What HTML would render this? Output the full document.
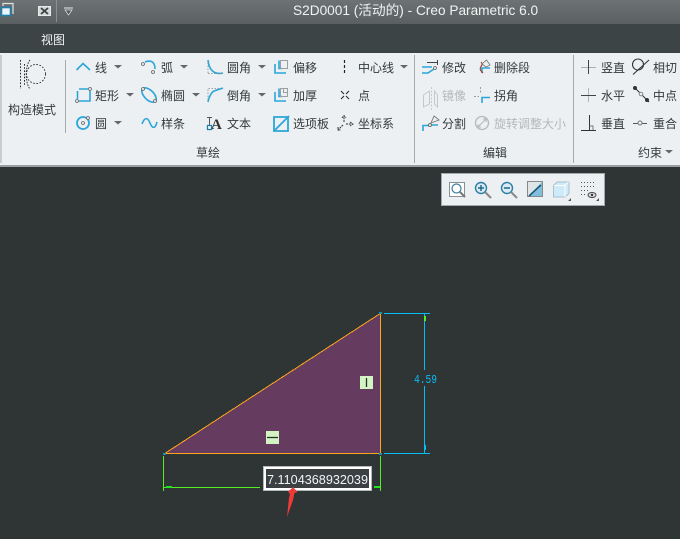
<!DOCTYPE html>
<html><head><meta charset="utf-8">
<style>
html,body{margin:0;padding:0;background:#2f3435}
#p{position:relative;width:680px;height:539px;overflow:hidden;background:#2f3435;font-family:"Liberation Sans","Noto Sans CJK SC",sans-serif}
.t{position:absolute;font-size:12px;line-height:16px;color:#33393c;white-space:nowrap;font-family:"Noto Sans CJK SC","Liberation Sans",sans-serif}
.d{color:#b4b8ba}
svg{position:absolute;left:0;top:0}
</style></head><body><div id="p">
<div style="position:absolute;left:0;top:0;width:680px;height:24px;background:linear-gradient(#6d7374,#5a6061)"></div>
<div style="position:absolute;left:0;top:24px;width:680px;height:29px;background:#3c4446"></div>
<div style="position:absolute;left:0;top:53px;width:680px;height:112px;background:#edf0f2;border-bottom:2px solid #9a9fa1"></div>
<div class="t" style="left:293px;top:1px;font-size:13.66px;line-height:20px;color:#f0f2f2;font-family:'Liberation Sans','Noto Sans CJK SC',sans-serif">S2D0001 (活动的) - Creo Parametric 6.0</div>
<div class="t" style="left:41px;top:32px;color:#f0f3f4">视图</div>

<div class="t" style="left:8px;top:102px">构造模式</div>
<div class="t" style="left:95px;top:60px">线</div>
<div class="t" style="left:161px;top:60px">弧</div>
<div class="t" style="left:227px;top:60px">圆角</div>
<div class="t" style="left:293px;top:60px">偏移</div>
<div class="t" style="left:358px;top:60px">中心线</div>
<div class="t" style="left:95px;top:88px">矩形</div>
<div class="t" style="left:161px;top:88px">椭圆</div>
<div class="t" style="left:227px;top:88px">倒角</div>
<div class="t" style="left:293px;top:88px">加厚</div>
<div class="t" style="left:358px;top:88px">点</div>
<div class="t" style="left:95px;top:116px">圆</div>
<div class="t" style="left:161px;top:116px">样条</div>
<div class="t" style="left:227px;top:116px">文本</div>
<div class="t" style="left:293px;top:116px">选项板</div>
<div class="t" style="left:358px;top:116px">坐标系</div>
<div class="t" style="left:196px;top:145px">草绘</div>
<div class="t" style="left:442px;top:60px">修改</div>
<div class="t" style="left:494px;top:60px">删除段</div>
<div class="t d" style="left:442px;top:88px">镜像</div>
<div class="t" style="left:494px;top:88px">拐角</div>
<div class="t" style="left:442px;top:116px">分割</div>
<div class="t d" style="left:494px;top:116px">旋转调整大小</div>
<div class="t" style="left:483px;top:145px">编辑</div>
<div class="t" style="left:601px;top:60px">竖直</div>
<div class="t" style="left:653px;top:60px">相切</div>
<div class="t" style="left:601px;top:88px">水平</div>
<div class="t" style="left:653px;top:88px">中点</div>
<div class="t" style="left:601px;top:116px">垂直</div>
<div class="t" style="left:653px;top:116px">重合</div>
<div class="t" style="left:638px;top:145px">约束</div>

<svg width="680" height="539" viewBox="0 0 680 539" fill="none">
<!-- title icons -->
<path d="M3 6V3.500H13V14" stroke="#dfe3e4" stroke-width="1.200"/>
<rect x="1.500" y="7.500" width="9" height="8" fill="#eaf4fa" stroke="#1c7fb0" stroke-width="1.600"/>
<rect x="38.500" y="6.500" width="12" height="9" fill="#d5d8d8" stroke="#e8eaea"/>
<path d="M41 8L48 14M48 8L41 14" stroke="#3c4040" stroke-width="1.800"/>
<path d="M56.500 0V22" stroke="#8b9192"/>
<path d="M64 8H73" stroke="#e6e8e8"/><path d="M65 10H72L68.500 15Z" fill="#555" stroke="#e0e2e2" stroke-width=".7"/>
<!-- dividers -->
<path d="M1 55V163M65.500 60V133M414.500 55V163M573.500 55V163" stroke="#a5aaac"/>
<!-- construction -->
<path d="M20.500 60V89M24.500 64V86" stroke="#222" stroke-dasharray="1.600 1.600"/>
<path d="M30 60C25 66 25 83 30 89" stroke="#333" stroke-dasharray="1.600 1.200"/>
<circle cx="36" cy="74" r="9.500" stroke="#222" stroke-width=".9" stroke-dasharray="1.600 1.600"/>
<!-- blue strokes -->
<g stroke="#2ba6d9" stroke-width="1.600">
<path d="M76.500 70L83 63.500L90 70"/>
<path d="M145 62C150 60 155 61 155 69"/>
<path d="M208 60C209 70 214 75 223 73"/>
<path d="M275 64V73H286M279 60.500V68.500H282"/>
<path d="M79 89H88M90 91V101H79M77.500 91V99"/>
<ellipse cx="149" cy="95" rx="9" ry="4.800" transform="rotate(45 149 95)"/>
<path d="M208 102C209 96 212 92 214 91L223 88"/>
<path d="M275 92V101H286M279 88.500V96.500H282"/>
<circle cx="83" cy="123" r="6" stroke-width="1.800"/>
<path d="M142 124C145 116 148 118 150 123C152 128 155 130 157 122"/>
<path d="M274 117H288V131H274Z" stroke-width="1.800"/>
<path d="M275 130L289 116" stroke-width="1.800"/>
<path d="M422 67H432M422 73H428L434 69"/>
<path d="M482 73V68H490"/>
<path d="M482 103V97.500H490"/>
<path d="M423 131V125.500H429M432 125H438"/>
</g>
<g fill="#e4e8ea" stroke="#666" stroke-width=".8">
<circle cx="143" cy="64" r="1.500"/><circle cx="153" cy="72" r="1.500"/>
<circle cx="143" cy="89" r="1.500"/><circle cx="155" cy="101" r="1.500"/>
<circle cx="77" cy="101" r="1.500"/><circle cx="90" cy="89" r="1.500"/>
<circle cx="88" cy="118" r="1.500"/><circle cx="83" cy="123" r="1.500"/>
<circle cx="435" cy="68" r="1.500"/>
</g>
<path d="M208 73V61M208 73.500H221M208 100V88.500H221" stroke="#888" stroke-dasharray="1.500 1.500" stroke-width=".8"/>
<g fill="#666">
<path d="M114 65H122L118 68.500ZM180 65H188L184 68.500ZM258 65H266L262 68.500ZM400 65H408L404 68.500ZM126 93H134L130 96.500ZM192 93H200L196 96.500ZM258 93H266L262 96.500ZM114 121H122L118 124.500ZM665 150H673L669 153.500Z"/>
</g>
<path d="M280.500 60.500H287.500V68.500H280.500ZM280.500 88.500H287.500V96.500H280.500ZM283.500 88.500V92.500H287.500" stroke="#9a9fa1"/>
<!-- text icon -->
<text x="211" y="129" font-family="Liberation Serif" font-size="15" font-weight="bold" fill="#333">A</text>
<path d="M207 117.500H212M209.500 117V125" stroke="#555"/>
<rect x="207.500" y="125.500" width="4" height="4" fill="#fff" stroke="#1c7fa8" stroke-width="1.300"/>
<!-- center line, point, csys -->
<path d="M344.500 60V75" stroke="#222" stroke-dasharray="3 2" stroke-width="1.200"/>
<path d="M341 91L344 94M349 91L346 94M341 99L344 96M349 99L346 96" stroke="#222"/>
<path d="M344 122V116M342 118L344 115.500L346 118M346 124H352M350 122L353 124L350 126M343 125L338 130M338 127V130H341" stroke="#333" stroke-dasharray="2 .8"/>
<!-- edit icons -->
<path d="M427 62.500H437M437.500 60V65" stroke="#444"/>
<path d="M483 73C476 67 485 66 481 62" stroke="#a04030" stroke-width="1.200"/>
<path d="M482 64L486 67L490 65L486.500 60Z" stroke="#777" fill="#edf0f2" stroke-width=".8"/>
<path d="M429.500 91L423.500 95V107L429.500 104ZM434.500 91L437.500 95V107L434.500 104Z" stroke="#c6c9ca"/>
<path d="M431.500 87V111" stroke="#c6c9ca" stroke-dasharray="2 1.500"/>
<path d="M480.500 87V94M474 96.500H479" stroke="#9a9ea0" stroke-dasharray="2 1.500"/>
<path d="M431 123L434 116L439 120Z" stroke="#777" fill="#edf0f2" stroke-width=".9"/>
<circle cx="430" cy="125" r="1.500" fill="#e4e8ea" stroke="#555" stroke-width=".8"/>
<circle cx="482" cy="123" r="6.500" stroke="#b4b8ba" stroke-width="1.300"/>
<path d="M478 127L486 119M478 124V127H481M483 119H486V122" stroke="#b4b8ba"/>
<!-- constraints -->
<path d="M581 67.500H596" stroke="#a8adae"/><path d="M588.500 60V74" stroke="#444"/>
<path d="M588.500 88V102" stroke="#b0b4b5"/><path d="M581 95.500H596" stroke="#444"/>
<path d="M581 130.500H596M589.500 115V130" stroke="#333"/><path d="M589.500 126H593V130" stroke="#777"/>
<circle cx="638" cy="64.500" r="5.500" stroke="#333" stroke-width="1.100"/>
<path d="M633 74.500L649 60" stroke="#333" stroke-width="1.100"/>
<path d="M635 88L649 102" stroke="#333"/>
<circle cx="635" cy="88" r="2" fill="#333"/><circle cx="641" cy="94" r="1.800" fill="#eee" stroke="#888"/><circle cx="647" cy="100" r="2" fill="#333"/>
<path d="M633 123.500H647" stroke="#555"/><circle cx="640" cy="123" r="2" fill="#edf0f2" stroke="#777"/>

<!-- canvas toolbar -->
<rect x="441.500" y="173.500" width="163" height="32" fill="#edf0f2" stroke="#a4a9ab"/>
<rect x="449.500" y="182.500" width="15" height="14" fill="#fff" stroke="#8a9094"/>
<circle cx="456.500" cy="188.500" r="4.500" stroke="#3d7d9c" stroke-width="1.200"/><path d="M460 192L465 197" stroke="#777" stroke-width="2"/>
<circle cx="481" cy="188" r="5.500" fill="#dcebf3" stroke="#2a7ea6" stroke-width="1.400"/><path d="M485 192L491 198" stroke="#888" stroke-width="2"/><path d="M478 188H484M481 185V191" stroke="#1f6a8e" stroke-width="1.500"/>
<circle cx="507" cy="188" r="5.500" fill="#dcebf3" stroke="#2a7ea6" stroke-width="1.400"/><path d="M511 192L517 198" stroke="#888" stroke-width="2"/><path d="M504 188H510" stroke="#1f6a8e" stroke-width="1.500"/>
<rect x="527.500" y="181.500" width="15" height="15" fill="#dfe4e6" stroke="#85898c"/>
<path d="M528 196L542 182V196Z" fill="#7fbfdc"/><path d="M529 196L541 185" stroke="#14506e" stroke-width="1.500"/>
<path d="M553.500 185.500L557 182H569V193.500L565 197H553.500Z" fill="#cfeaf8" stroke="#a8c0cc"/><path d="M554 185.500H565V197M565 185.500L568.500 182" stroke="#fff"/>
<path d="M581 182.500h13M581 186.500h13M581 190.500h9M581 194.500h5" stroke="#555" stroke-dasharray="1 2"/>
<ellipse cx="592" cy="195" rx="4" ry="2.500" fill="#ddd" stroke="#444"/><circle cx="592" cy="195" r="1.200" fill="#333"/>
<path d="M571 198V201H568ZM599 198V201H596Z" fill="#555"/>

<!-- sketch -->
<path d="M164 454L381 313V454Z" fill="#653c60"/>
<path d="M380.500 313V454M164 453.500H381" stroke="#ffa51a" stroke-width="1" shape-rendering="crispEdges"/>
<path d="M164 454L381 313" stroke="#ffa51a" stroke-width="1" shape-rendering="crispEdges"/>
<path d="M163.500 456V491M380.500 456V491M164 487.500H260" stroke="#55ee22" stroke-width="1"/>
<path d="M166 487H172M374 487H380" stroke="#22e222" stroke-width="2"/>
<path d="M384 313.500H430M384 453.500H430M424.500 314V370M424.500 386V453" stroke="#06bdf5" stroke-width="1"/>
<path d="M425 316V321" stroke="#55ee22" stroke-width="2"/><path d="M425 445V450" stroke="#06bdf5" stroke-width="2"/>
<rect x="379" y="312" width="3" height="2" fill="#1d8fb0"/><rect x="379" y="453" width="3" height="2" fill="#1d8fb0"/><rect x="163" y="453" width="3" height="2" fill="#1d8fb0"/>
<text x="414" y="383" font-family="Liberation Mono" font-size="12" fill="#06bdf5" textLength="23" lengthAdjust="spacingAndGlyphs">4.59</text>
<rect x="360" y="376" width="13" height="13" fill="#d3f3c4"/>
<path d="M366.500 378V387" stroke="#2a2f2c" stroke-width="1.300"/>
<rect x="266" y="431" width="13" height="13" fill="#d3f3c4"/>
<path d="M267 437.500H278" stroke="#2a2f2c" stroke-width="1.300"/>
<!-- input -->
<rect x="264.500" y="467.500" width="106" height="22" fill="#3d4042" stroke="#fff" stroke-width="3"/>
<rect x="263.500" y="466.500" width="108" height="24" stroke="#b4baba" stroke-width="1"/>
<text x="267" y="484" font-family="Liberation Sans" font-size="13" fill="#eef4f8" textLength="101" lengthAdjust="spacingAndGlyphs">7.1104368932039</text>
<!-- arrow -->
<path d="M293 487L297.500 492L294.500 493L293 500L287 517L289 498L290 494L288 492Z" fill="#f03a38"/>
</svg>
</div></body></html>
